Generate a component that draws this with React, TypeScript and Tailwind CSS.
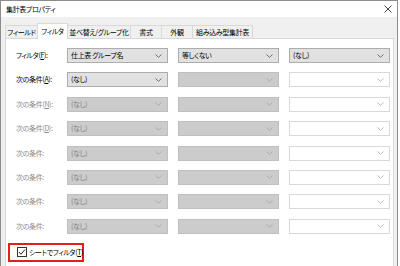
import React from "react";

type Kind = "on" | "off" | "blank";

function Chevron({ color }: { color: string }) {
  return (
    <svg width="7" height="4" viewBox="0 0 7 4" className="shrink-0">
      <path d="M0.5 0.5 L3.5 3.3 L6.5 0.5" fill="none" stroke={color} strokeWidth="0.9" />
    </svg>
  );
}

function Select({ kind, text }: { kind: Kind; text?: string }) {
  const box =
    kind === "on"
      ? "bg-[#e1e1e1] border-[#adadad] text-black"
      : kind === "off"
      ? "bg-[#cccccc] border-[#bfbfbf] text-[#838383]"
      : "bg-white border-[#d9d9d9] text-black";
  const chev = kind === "on" ? "#606060" : kind === "off" ? "#a8a8a8" : "#b4b4b4";
  return (
    <div className={`h-[15px] border flex items-center justify-between pl-[3px] pr-[5px] ${box}`}>
      <span className="leading-none whitespace-pre">{text ?? ""}</span>
      <Chevron color={chev} />
    </div>
  );
}

function Label({ pre, key1, dim }: { pre: string; key1?: string; dim?: boolean }) {
  return (
    <div className={`w-[51px] shrink-0 leading-none whitespace-nowrap ${dim ? "text-[#8a8a8a]" : "text-black"}`}>
      {pre}
      {key1 && (
        <>
          (<span className="underline underline-offset-1">{key1}</span>)
        </>
      )}
      :
    </div>
  );
}

const rows: { pre: string; key1?: string; dim: boolean; c1: Kind; t1: string; c2: Kind; t2?: string; c3: Kind; t3?: string }[] = [
  { pre: "フィルタ", key1: "F", dim: false, c1: "on", t1: "仕上表 グループ名", c2: "on", t2: "等しくない", c3: "on", t3: "(なし)" },
  { pre: "次の条件", key1: "A", dim: false, c1: "on", t1: "(なし)", c2: "off", c3: "blank" },
  { pre: "次の条件", key1: "N", dim: true, c1: "off", t1: "(なし)", c2: "off", c3: "blank" },
  { pre: "次の条件", key1: "D", dim: true, c1: "off", t1: "(なし)", c2: "off", c3: "blank" },
  { pre: "次の条件", dim: true, c1: "off", t1: "(なし)", c2: "off", c3: "blank" },
  { pre: "次の条件", dim: true, c1: "off", t1: "(なし)", c2: "off", c3: "blank" },
  { pre: "次の条件", dim: true, c1: "off", t1: "(なし)", c2: "off", c3: "blank" },
  { pre: "次の条件", dim: true, c1: "off", t1: "(なし)", c2: "off", c3: "blank" },
];

const tabs = [
  { name: "フィールド", w: "w-[33px]" },
  { name: "フィルタ", w: "w-[31px]", active: true },
  { name: "並べ替え/グループ化", w: "w-[64px]" },
  { name: "書式", w: "w-[32px]" },
  { name: "外観", w: "w-[32px]" },
  { name: "組み込み型集計表", w: "w-[61px]" },
];

export default function App() {
  return (
    <div className="w-[400px] h-[266px] bg-white overflow-hidden text-[7px] tracking-[-0.35px] [font-feature-settings:'palt'] [font-family:'Noto_Sans_CJK_JP','Noto_Sans',sans-serif]">
      <div className="w-[398px] h-[266px] border-l border-t border-r border-[#8c8c8c] bg-[#f0f0f0] flex flex-col">
        <div className="h-[16px] bg-white flex items-center justify-between pl-[5px] pr-[5px]">
          <span className="text-black">集計表プロパティ</span>
          <svg width="8" height="8" viewBox="0 0 8 8">
            <path d="M0.5 0.5 L7.5 7.5 M7.5 0.5 L0.5 7.5" stroke="#333" strokeWidth="0.9" />
          </svg>
        </div>
        <div className="flex items-end pl-[4px] pt-[5px] h-[21px]">
          {tabs.map((t) =>
            t.active ? (
              <div
                key={t.name}
                className={`${t.w} h-[16px] -mb-px -ml-px relative z-10 bg-white border border-b-0 border-[#d9d9d9] flex items-center justify-center text-black whitespace-nowrap`}
              >
                {t.name}
              </div>
            ) : (
              <div
                key={t.name}
                className={`${t.w} h-[13px] bg-[#f0f0f0] border border-b-0 border-[#d9d9d9] -ml-px first:ml-0 flex items-center justify-center text-black whitespace-nowrap`}
              >
                {t.name}
              </div>
            )
          )}
        </div>
        <div className="ml-[4px] w-[389px] flex-1 bg-white border border-b-0 border-[#d9d9d9] pl-[10px] pt-[9px] flex flex-col">
          <div className="flex flex-col gap-[9.4px]">
            {rows.map((r, i) => (
              <div key={i} className="flex items-center h-[15px]">
                <Label pre={r.pre} key1={r.key1} dim={r.dim} />
                <div className="w-[101px]">
                  <Select kind={r.c1} text={r.t1} />
                </div>
                <div className="w-[101px] ml-[10px]">
                  <Select kind={r.c2} text={r.t2} />
                </div>
                <div className="w-[101px] ml-[10px]">
                  <Select kind={r.c3} text={r.t3} />
                </div>
              </div>
            ))}
          </div>
          <div className="mt-[9px] -ml-[8px] w-[76px] h-[19px] border-2 border-[#e0201b] flex items-center pl-[7px] gap-[2px]">
            <svg width="10" height="10" viewBox="0 0 10 10" className="shrink-0">
              <rect x="0.5" y="0.5" width="9" height="9" fill="white" stroke="#333" />
              <path d="M2 5 L4 7.2 L8 2.5" fill="none" stroke="#222" strokeWidth="1" />
            </svg>
            <span className="text-black leading-none whitespace-nowrap">
              シートでフィルタ(<span className="underline underline-offset-1">T</span>)
            </span>
          </div>
        </div>
      </div>
    </div>
  );
}
